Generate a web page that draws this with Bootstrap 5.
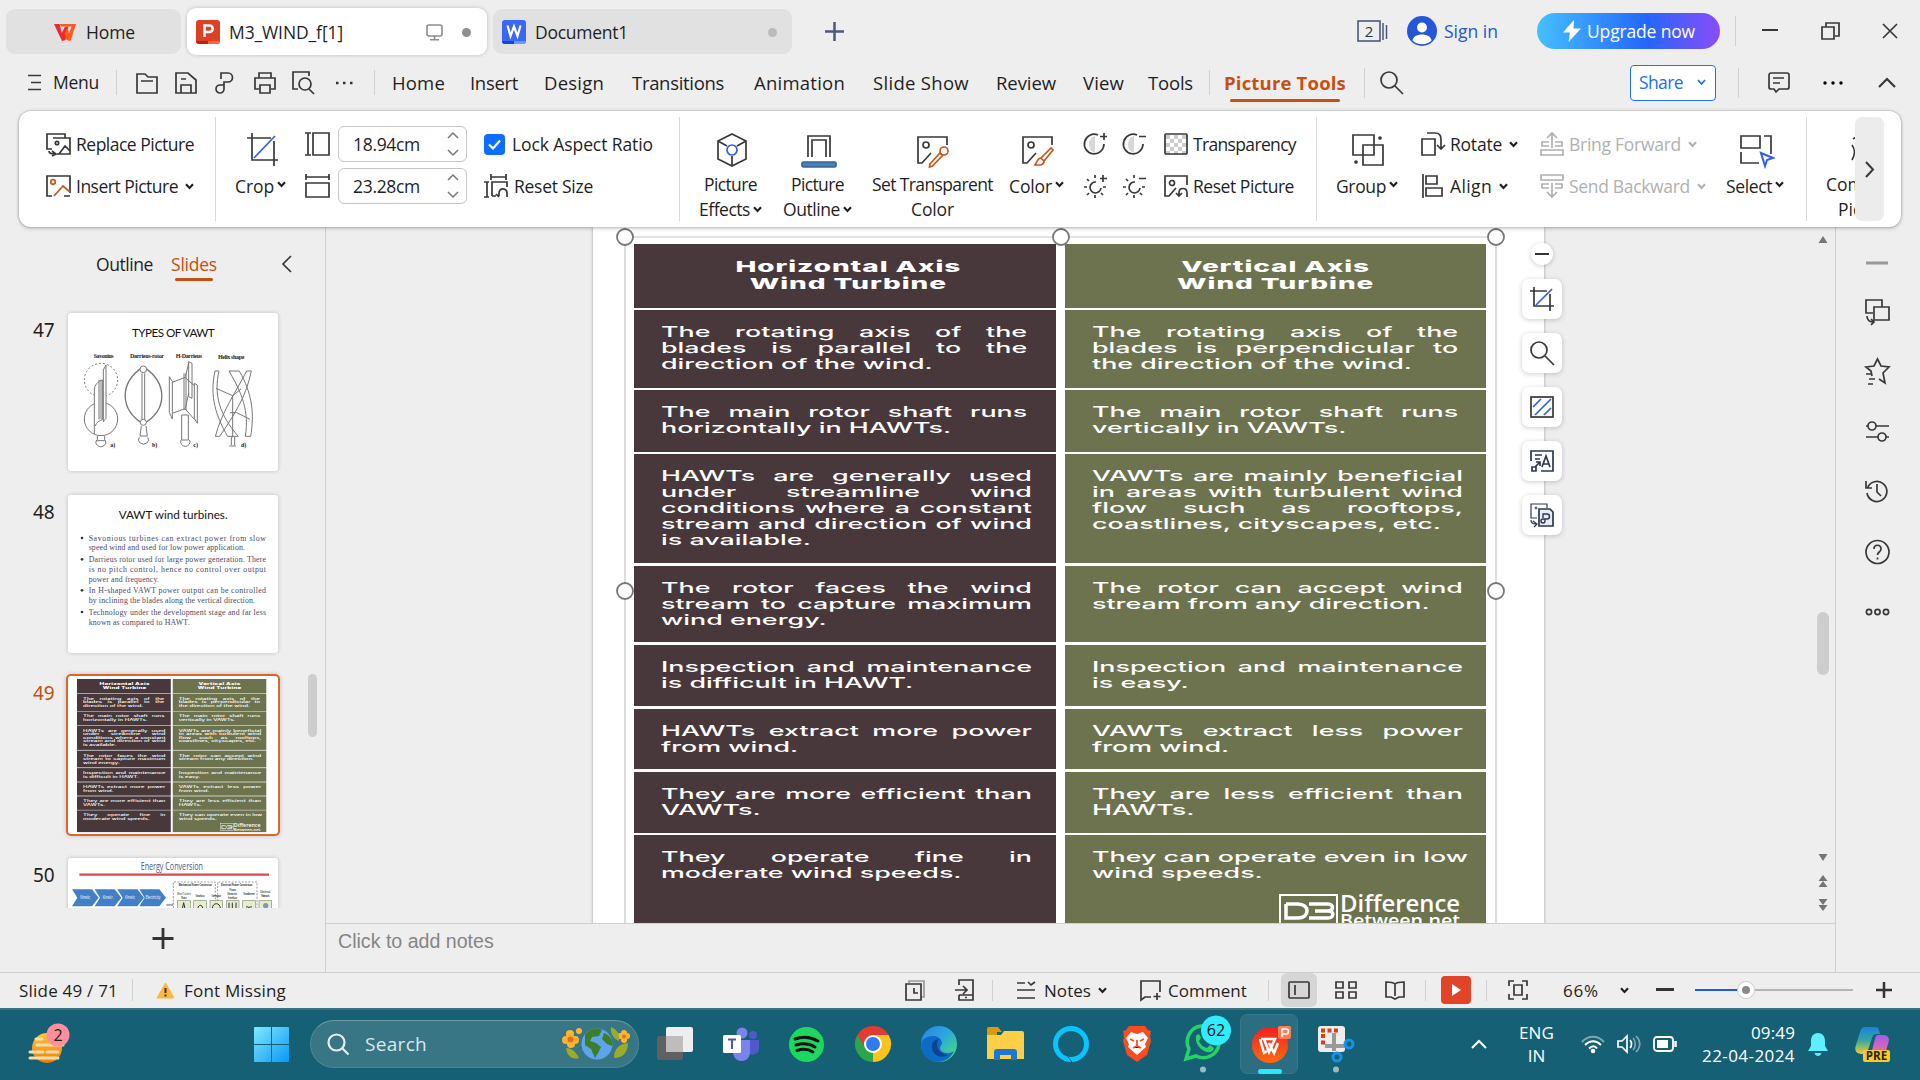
<!DOCTYPE html>
<html lang="en">
<head>
<meta charset="utf-8">
<title>M3_WIND_f[1] - Presentation</title>
<link href="https://cdn.jsdelivr.net/npm/bootstrap@5.3.0/dist/css/bootstrap.min.css" rel="stylesheet">
<script src="https://cdn.jsdelivr.net/npm/bootstrap@5.3.0/dist/js/bootstrap.bundle.min.js"></script>
<style>
html,body{width:1920px;height:1080px;overflow:hidden}
body{background:#eeeeee;font-family:"Open Sans","Noto Sans",sans-serif;font-size:17.5px;line-height:25px;color:#1f1f1f}
svg{display:block;overflow:visible;flex:none}
.ln{fill:none;stroke:#383838;stroke-width:1.7}
.gbar{display:grid;align-items:center;justify-items:start;white-space:nowrap}
.vline{width:1px;background:#d0d0d0}
[data-w]{display:inline-block;white-space:nowrap}
.orange{color:#c5500f}
/* title bar */
.titlebar{height:62px;padding-left:6px;grid-template-columns:181px 306px 332px 532px 50px 37px 93px 198px 27px 59px 61px 30px}
.doc-tab{height:45px;border-radius:9px;background:#e1e1e1;padding-top:2px}
.doc-tab.on{background:#fff;height:47px;box-shadow:0 0 4px #0003}
.tname{margin-left:9px}
.dot{width:9px;height:9px;border-radius:50%;background:#bbb;margin-right:15px}
.on .dot{background:#8f8f8f;margin:0 16px 0 19px}
.upgrade{width:183px;height:36px;background:linear-gradient(90deg,#45c0ff,#2467ff 60%,#8b4cf7);color:#fff;border-radius:18px;padding-left:26px}
/* menu bar */
.menubar{height:49px;padding:0 0 8px 28px;grid-template-columns:25px 63px 20px 39px 40px 39px 38px 43px 39px 18px 78px 74px 88px 122px 119px 123px 87px 65px 61px 15px 140px 16px 250px 108px 30px 55px 55px 30px;font-size:18.5px}
.pt-tab{position:relative}
.pt-tab::after{content:"";position:absolute;left:6px;right:6px;bottom:-7px;height:3px;border-radius:2px;background:#c5500f}
.share{width:86px;height:36px;border:1.5px solid #1a73f5;border-radius:4px;background:#fff;color:#1a6ff0;padding-left:8px}
/* ribbon */
.ribbon{width:1882px;height:116px;margin-left:19px;background:#fff;border-radius:12px;box-shadow:0 0 3px #0005,0 2px 4px #0002;padding-left:27px;align-items:start;position:relative;z-index:5;
grid-template-columns:169px 20px 70px 33px 146px 195px 20px 84px 89px 137px 75px 80px 152px 20px 85px 119px 186px 80px 20px 29px 29px}
.ribbon>.vline{height:104px;margin-top:6px;background:#d9d9d9}
.stack{padding-top:12px}
.stack>div{height:42px;display:flex;align-items:center;gap:5px}
.stack>.pair{gap:16px}
.bigbtn{padding-top:22px;text-align:center}
.bigbtn>svg{margin:0 auto 3px;position:relative;left:1px;top:-1px}
.bigbtn>.chev{margin-left:3px;top:1px;left:0;vertical-align:1px}
.one>svg{margin-bottom:5px}
.spin{width:129px;height:36px;border:1.5px solid #c4c4c4;border-radius:6px;padding:0 7px 0 14px}
.check{width:21px;height:21px;background:#0d6efd;border-radius:4px}
.off{color:#b0b0b0}
.off .ln{stroke:#b0b0b0}
.chev{margin-left:2px}
.more{width:29px;height:104px;margin-top:6px;background:#ececec;border-radius:7px}
.cut{width:29px;overflow:hidden;padding-top:22px;height:115px}
.cut svg{margin-bottom:3px}
/* workspace */
.work{height:745px}
.side{width:326px;border-right:1.5px solid #cfcfcf}
.side-head{height:78px;padding:0 0 4px 96px;grid-template-columns:75px 111px 20px}
.sl-tab{position:relative}
.sl-tab::after{content:"";position:absolute;left:4px;right:4px;bottom:-4px;height:3px;background:#c5500f;border-radius:2px}
.slides{height:603px;overflow:hidden;padding:8px 0 0 33px;position:relative}
.srow{display:flex;height:181.7px}
.srow>b{font-weight:400;width:35px;font-size:19px;padding-top:5px;font-family:"Noto Sans",sans-serif}
.thumb{width:210px;height:158px;background:#fff;border-radius:3px;box-shadow:0 0 4px #0003;overflow:hidden;flex:none}
.thumb.sel{margin:-2px 0 0 -2px;width:214px;height:162px;border:2px solid #d9662a;border-radius:5px}
.thumb.sel .pic{transform:scale(.2222);transform-origin:0 0;margin:3px 0 0 9px}
.sidebar-thumb{position:absolute;left:308px;top:369px;width:9px;height:63px;border-radius:5px;background:#cdcdcd}
.addslide{margin:20px 0 0 153px}
.center-pane{width:1510px;border-right:1.5px solid #cfcfcf}
.canvas{height:697px;overflow:hidden;position:relative;border-bottom:1.5px solid #cfcfcf;padding-left:267px}
.page{width:951px;height:800px;background:#fff;box-shadow:0 0 3px #0005;padding:17px 0 0 41px}
.overlay{position:absolute}
.fl{position:absolute;left:1196px;width:40px;height:40px;border-radius:7px;background:#fff;box-shadow:0 1px 5px #0003;display:flex;align-items:center;justify-content:center}
.notes{height:48px;color:#858585;font:19.6px "Liberation Sans",sans-serif;padding:6px 0 0 12px}
/* comparison picture on the slide */
.pic{width:852px;height:689px;display:grid;grid-template-columns:421.5px 421.5px;column-gap:9px;row-gap:2.5px;grid-template-rows:63.7px 77.6px 61.5px 108.8px 76.8px 61.2px 60.5px 61px 97.5px;position:relative;flex:none}
.cell{padding:14px 0 0 27.2px;background:#6d734f;color:#fff;overflow:hidden}
.cell.h{background:#48383b}
.cell.cellhead{padding:14px 0 0 0}
.wide{transform:scaleX(1.84);transform-origin:0 0;width:201.6px;font:500 14.6px/16px Inter,sans-serif;white-space:nowrap}
.wide.short{width:199px}
.wide div{text-align-last:justify;height:16px}
.wide div:last-child{text-align-last:left}
.wide.widehead{width:229px;font:800 15.2px/17px Inter,sans-serif;letter-spacing:.5px}
.widehead div,.widehead div:last-child{text-align-last:center;height:17px}
.h .wide.widehead{width:233px}
.dblogo{position:absolute;left:645px;top:650px}
/* right rail */
.rail{padding:1px 0 0 29px}
/* status */
.status{height:36px;border-top:1.5px solid #cfcfcf;padding:0 0 1px 19px;grid-template-columns:113px 24px 28px 721px 50px 37px 25px 27px 96px 28px 100px 13px 54px 50px 40px 16px 45px 22px 55px 57px 35px 39px 181px 20px;font-size:17px}
.selbox{width:36px;height:34px;background:#d6d6d6;border-radius:6px}
.play{width:30px;height:28px;background:#e14427;border-radius:4px}
/* taskbar */
.taskbar{height:72px;background:#156074;border-top:2px solid #3c717c;padding:0 0 2px 30px;color:#fff;grid-template-columns:224px 56px 347px 66px 66px 66px 66px 66px 66px 69px 62px 56px 77px 154px 48px 62px 36px 36px 49px 106px 47px 40px}
.find{width:329px;height:48px;border-radius:24px;background:#387585;border:1px solid #4e8895;border-top-color:#6b9aa5;padding:0 9px 0 16px;color:#dbe8ea;font-size:19px}
.active-app{width:58px;height:60px;border-radius:7px;background:#2c6e81;border:1px solid #37788a}
.clock{line-height:23px;font-size:17px;width:93px;text-align:right}
.lang{line-height:23px;font-size:17px}
</style>
</head>
<body class="d-flex flex-column">
<svg width="0" height="0" class="overlay"><defs>
<symbol id="chev" viewBox="0 0 9 7" overflow="visible"><path d="M1 1.2 4.5 5 8 1.2" fill="none" stroke="currentColor" stroke-width="2.1"/></symbol>
<symbol id="wps" viewBox="0 0 24 19"><path d="M1 1h5.5l2.3 9L12 3.500h3.500L12.500 17l-3.500 1z" fill="#f0282d"/><path d="M7 1h16l-5.500 17-4-1-2-6 3-6.500 1.500 6L18.500 3.500H8z" fill="#ff5a1c"/></symbol>
<linearGradient id="g1" x1="0" y1="0" x2="1" y2="1"><stop offset="0" stop-color="#7fe9ff"/><stop offset="1" stop-color="#0a97f5"/></linearGradient>
<linearGradient id="g2" x1="0" y1="0" x2="0" y2="1"><stop offset="0" stop-color="#ffc53a"/><stop offset="1" stop-color="#ef7a10"/></linearGradient>
<linearGradient id="g3" x1="0" y1="0" x2="1" y2="1"><stop offset="0" stop-color="#2a7fe8"/><stop offset=".45" stop-color="#2aa8e0"/><stop offset="1" stop-color="#4fe26a"/></linearGradient>
<linearGradient id="g4" x1="0" y1="0" x2="0" y2="1"><stop offset="0" stop-color="#ef2020"/><stop offset="1" stop-color="#ff6a10"/></linearGradient>
<linearGradient id="g5" x1="0" y1="0" x2="0" y2="1"><stop offset="0" stop-color="#1d7fe0"/><stop offset=".5" stop-color="#35a8a0"/><stop offset="1" stop-color="#f0d030"/></linearGradient>
<linearGradient id="g6" x1="0" y1="0" x2="0" y2="1"><stop offset="0" stop-color="#a45af0"/><stop offset="1" stop-color="#f0709a"/></linearGradient>
</defs></svg>

<header class="gbar titlebar">
  <div class="doc-tab d-flex align-items-center" style="width:175px;padding-left:47px"><svg width="24" height="19"><use href="#wps"/></svg><span class="tname" data-w="49">Home</span></div>
  <div class="doc-tab on d-flex align-items-center" style="width:300px;padding-left:9px">
    <svg width="24" height="24" viewBox="0 0 24 24"><rect width="24" height="24" rx="3" fill="#dd4023"/><path d="M0 21h12v3H3a3 3 0 0 1-3-3z" fill="#b8260f"/><path d="M12 21h12a3 3 0 0 1-3 3h-9z" fill="#ff6440"/><path d="M8.500 17V5.500h5a3.200 3.200 0 0 1 0 6.500h-5" fill="none" stroke="#fff" stroke-width="2.500"/></svg>
    <span class="tname" data-w="114">M3_WIND_f[1]</span>
    <svg class="ms-auto" width="17" height="17" viewBox="0 0 17 17"><rect x="1" y="1" width="15" height="11" rx="2" fill="none" stroke="#8d8d8d" stroke-width="1.600"/><path d="M8.500 12v3.500M4 15.800h9" stroke="#8d8d8d" stroke-width="1.600"/></svg>
    <i class="dot"></i></div>
  <div class="doc-tab d-flex align-items-center" style="width:299px;padding-left:9px">
    <svg width="24" height="24" viewBox="0 0 24 24"><rect width="24" height="24" rx="3" fill="#3a67f7"/><path d="M0 21h12v3H3a3 3 0 0 1-3-3z" fill="#1545cf"/><path d="M12 21h12a3 3 0 0 1-3 3h-9z" fill="#6f97ff"/><path d="M5.500 5.500l3 10.500L12 6.500 15.500 16l3-10.500" fill="none" stroke="#fff" stroke-width="2.200"/></svg>
    <span class="tname" data-w="93">Document1</span><i class="dot ms-auto"></i></div>
  <svg width="19" height="19" viewBox="0 0 19 19"><path d="M9.500 0v19M0 9.500h19" stroke="#4b5a7a" stroke-width="2.500"/></svg>
  <svg width="31" height="22" viewBox="0 0 31 22"><rect x="1" y="1" width="22" height="20" fill="none" stroke="#4b5a7a" stroke-width="1.600"/><path d="M26 3v17M29.500 5v14" stroke="#4b5a7a" stroke-width="1.500"/><text x="12" y="16.500" text-anchor="middle" font-size="15" fill="#333">2</text></svg>
  <svg width="30" height="30" viewBox="0 0 30 30"><circle cx="15" cy="15" r="15" fill="#2356d8"/><circle cx="15" cy="11.500" r="5" fill="#fff"/><path d="M5.500 24.500c1-8 18-8 19 0a14 14 0 0 1-19 0z" fill="#fff"/></svg>
  <span data-w="54" style="color:#2356d8">Sign in</span>
  <div class="upgrade d-flex align-items-center"><svg width="18" height="22" viewBox="0 0 18 22"><path d="M11 0 0 12.500h7L5.500 22 18 8.500h-7.500z" fill="#fff"/></svg><span data-w="108" style="margin-left:6px">Upgrade now</span></div>
  <i class="vline" style="height:30px"></i>
  <svg width="16" height="4"><path d="M0 1h16" stroke="#222" stroke-width="1.800"/></svg>
  <svg class="ln" width="19" height="18" viewBox="0 0 19 18"><path d="M5 5V1h13v13h-4M1 5h12v12H1z"/></svg>
  <svg class="ln" width="16" height="16" viewBox="0 0 16 16"><path d="M1 1l14 14M15 1 1 15"/></svg>
</header>

<nav class="gbar menubar">
  <svg class="ln" width="14" height="17" viewBox="0 0 14 17"><path d="M0 1.500h13M3 8.500h10M0 15.500h13"/></svg>
  <span data-w="46" style="font-size:17.5px">Menu</span>
  <i class="vline" style="height:25px"></i>
  <svg class="ln" width="22" height="22" viewBox="0 0 22 22"><path d="M1 21V2h8l3 3h9v16zM5 9h12"/></svg>
  <svg class="ln" width="22" height="22" viewBox="0 0 22 22"><path d="M1 1h12l8 7v13H1zM6 21v-8h10v8M6 7h5"/></svg>
  <svg class="ln" width="18" height="22" viewBox="0 0 18 22"><path d="M6 7V1h7a4.500 4.500 0 0 1 0 9H9v7a4 4 0 1 1-4-4h4"/></svg>
  <svg class="ln" width="22" height="22" viewBox="0 0 22 22"><path d="M5 6V1h12v5M5 17H1V6h20v11h-4M6 13h10v8H6z"/></svg>
  <svg class="ln" width="23" height="23" viewBox="0 0 23 23"><path d="M17 5V1H1v17h5"/><circle cx="13" cy="13" r="6"/><path d="M17 18l5 5"/></svg>
  <svg width="20" height="4" viewBox="0 0 20 4"><path d="M1 2h2.500M8 2h2.500M15 2h2.500" stroke="#333" stroke-width="2.500"/></svg>
  <i class="vline" style="height:25px"></i>
  <span data-w="53">Home</span><span data-w="48">Insert</span><span data-w="60">Design</span><span data-w="92">Transitions</span><span data-w="91">Animation</span><span data-w="96">Slide Show</span><span data-w="60">Review</span><span data-w="41">View</span><span data-w="45">Tools</span>
  <i class="vline" style="height:25px"></i>
  <span class="pt-tab orange fw-bold"><span data-w="122">Picture Tools</span></span>
  <i class="vline" style="height:30px"></i>
  <svg class="ln" width="23" height="23" viewBox="0 0 23 23"><circle cx="9" cy="9" r="8"/><path d="M15 15l8 8"/></svg>
  <div class="share d-flex align-items-center"><span data-w="44" style="font-size:17.5px">Share</span><svg width="9" height="7" style="margin-left:14px"><path d="M1 1l3.500 4L8 1" fill="none" stroke="#1a6ff0" stroke-width="1.700"/></svg></div>
  <i class="vline" style="height:30px"></i>
  <svg class="ln" width="22" height="21" viewBox="0 0 22 21"><path d="M3 1h16a2 2 0 0 1 2 2v12a2 2 0 0 1-2 2h-8l-3 3-2-3H3a2 2 0 0 1-2-2V3a2 2 0 0 1 2-2zM5 6h11M5 11h7"/></svg>
  <svg width="20" height="4" viewBox="0 0 20 4"><circle cx="2" cy="2" r="1.700"/><circle cx="10" cy="2" r="1.700"/><circle cx="18" cy="2" r="1.700"/></svg>
  <svg class="ln" width="18" height="10" viewBox="0 0 18 10"><path d="M1 9l8-8 8 8" stroke-width="2.200"/></svg>
</nav>

<section class="gbar ribbon">
  <div class="stack">
    <div><svg class="ln" width="25" height="22" viewBox="0 0 25 22"><path d="M19 5V1H1v15h5M7 5h17v16H11M13 21l6-8 5 5M3 18c0 3 3 3 6 3M6 18l4 3-4 2"/><circle cx="11" cy="10" r="1.700"/></svg><span data-w="118">Replace Picture</span></div>
    <div><svg class="ln" width="25" height="22" viewBox="0 0 25 22"><path d="M24 18V1H1v20h5M18 21h6"/><path d="M8 21l9-10 7 6" stroke="#c9561a"/><circle cx="7" cy="7" r="2.300" stroke="#c9561a"/></svg><span data-w="102">Insert Picture</span><svg class="chev" width="9" height="7"><use href="#chev"/></svg></div>
  </div>
  <i class="vline"></i>
  <div class="bigbtn one"><svg class="ln" width="34" height="36" viewBox="0 0 34 36"><path d="M2 6h24M7 1v27h26M29 9v25"/><path d="M9 26 30 4" stroke="#2f5fe8"/></svg><span data-w="39">Crop</span><svg class="chev d-inline" width="9" height="7"><use href="#chev"/></svg></div>
  <div class="stack">
    <div><svg class="ln" width="25" height="24" viewBox="0 0 25 24"><path d="M8 1h16v22H8zM3 1v22M0 1h6M0 23h6"/></svg></div>
    <div><svg class="ln" width="25" height="24" viewBox="0 0 25 24"><path d="M1 9h23v14H1zM1 3h23M1 0v6M24 0v6"/></svg></div>
  </div>
  <div class="stack">
    <div><div class="spin d-flex align-items-center justify-content-between"><span data-w="67">18.94cm</span><svg width="12" height="24" viewBox="0 0 12 24" fill="none" stroke="#777" stroke-width="1.500"><path d="M1 6l5-5 5 5M1 18l5 5 5-5"/></svg></div></div>
    <div><div class="spin d-flex align-items-center justify-content-between"><span data-w="67">23.28cm</span><svg width="12" height="24" viewBox="0 0 12 24" fill="none" stroke="#777" stroke-width="1.500"><path d="M1 6l5-5 5 5M1 18l5 5 5-5"/></svg></div></div>
  </div>
  <div class="stack">
    <div><span class="check me-1"><svg width="21" height="21" viewBox="0 0 21 21"><path d="M5 10.500l4 4 7-8" fill="none" stroke="#fff" stroke-width="2.200"/></svg></span><span data-w="141" style="margin-left:-2px">Lock Aspect Ratio</span></div>
    <div><svg class="ln" width="25" height="24" viewBox="0 0 25 24"><path d="M7 3h15M7 0v6M22 0v6M3 8v15M0 8h5M0 23h5M8 22V8h15v5M8 22h4M15 19v3M15 19c0-6 8-5 8 0v4M12 20l3 3"/></svg><span data-w="79">Reset Size</span></div>
  </div>
  <i class="vline"></i>
  <div class="bigbtn"><svg class="ln" width="30" height="36" viewBox="0 0 30 36"><path d="M15 2l14 7v18l-14 7-14-7V9zM1 9l9 5M29 9l-9 5M15 24v10"/><circle cx="15" cy="18" r="5" stroke="#2f5fe8"/></svg><span data-w="53">Picture</span><br><span data-w="51">Effects</span><svg class="chev d-inline" width="9" height="7"><use href="#chev"/></svg></div>
  <div class="bigbtn"><svg class="ln" width="36" height="36" viewBox="0 0 36 36"><path d="M7 25V4h22v21M11 25V8h14v17"/><rect x="1" y="30" width="34" height="5" rx="1.500" fill="#4a7ebb" stroke="#36659c"/></svg><span data-w="53">Picture</span><br><span data-w="57">Outline</span><svg class="chev d-inline" width="9" height="7"><use href="#chev"/></svg></div>
  <div class="bigbtn"><svg class="ln" width="32" height="36" viewBox="0 0 32 36"><path d="M30 13V5H1v26h4l9-10"/><circle cx="9" cy="13" r="3"/><g stroke="#c9561a"><path d="M13 32l10-11 2.500 2.500L15.500 34l-3 1z"/><circle cx="27" cy="19" r="4"/></g></svg><span data-w="121">Set Transparent</span><br><span data-w="43">Color</span></div>
  <div class="bigbtn one"><svg class="ln" width="32" height="36" viewBox="0 0 32 36"><path d="M30 13V5H1v26h4l9-10"/><circle cx="9" cy="13" r="3"/><g stroke="#c9561a"><path d="M29 16 19 26l3 3 9-11zM19 26c-3 0-3 2-6 7h6c3-1 3-3 3-4"/></g></svg><span data-w="43">Color</span><svg class="chev d-inline" width="9" height="7"><use href="#chev"/></svg></div>
  <div class="stack">
    <div class="pair"><svg class="ln" width="23" height="23" viewBox="0 0 23 23"><path d="M11 3a9 9 0 0 0 0 17z" fill="#d8d8d8" stroke="none"/><path d="M14 2a9.800 9.800 0 1 0 6 9M20 0v7M16 3.500h7"/></svg><svg class="ln" width="23" height="23" viewBox="0 0 23 23"><path d="M11 3a9 9 0 0 0 0 17z" fill="#d8d8d8" stroke="none"/><path d="M14 2a9.800 9.800 0 1 0 6 9M16 3.500h7"/></svg></div>
    <div class="pair"><svg class="ln" width="23" height="23" viewBox="0 0 23 23"><path d="M12 7a5.500 5.500 0 1 0 5 6M11 0v3M11 20v3M0 12h3M3 4l2 2M3 20l2-2M17 18l2 2M19 0v7M16 3.500h7M19 12h3"/></svg><svg class="ln" width="23" height="23" viewBox="0 0 23 23"><path d="M12 7a5.500 5.500 0 1 0 5 6M11 0v3M11 20v3M0 12h3M3 4l2 2M3 20l2-2M17 18l2 2M16 3.500h7M19 12h3"/></svg></div>
  </div>
  <div class="stack">
    <div><svg class="ln" width="24" height="22" viewBox="0 0 24 22"><path d="M2 4h20M2 12h20M2 20h20" stroke="#ccc" stroke-width="4" stroke-dasharray="4 4"/><path d="M6 8h16M6 16h16" stroke="#ccc" stroke-width="4" stroke-dasharray="4 4"/><rect x="1" y="1" width="22" height="20" rx="1"/></svg><span data-w="103">Transparency</span></div>
    <div><svg class="ln" width="24" height="22" viewBox="0 0 24 22"><path d="M23 10V1H1v20h4l7-8M15 17v4M15 18c0-6 8-6 8 0v4M12 18l3 3 3-3"/><circle cx="8" cy="8" r="2.500"/></svg><span data-w="101">Reset Picture</span></div>
  </div>
  <i class="vline"></i>
  <div class="bigbtn one"><svg class="ln" width="32" height="36" viewBox="0 0 32 36"><path d="M1 3h21v20H1zM11 13h20v20H11z"/><circle cx="28" cy="6" r="1" fill="#333"/><circle cx="4" cy="30" r="1" fill="#333"/></svg><span data-w="50">Group</span><svg class="chev d-inline" width="9" height="7"><use href="#chev"/></svg></div>
  <div class="stack">
    <div><svg class="ln" width="24" height="24" viewBox="0 0 24 24"><path d="M1 7h13v16H1zM6 1h8c5 0 6 3 6 6v10M16 13l4 4 4-4"/></svg><span data-w="52">Rotate</span><svg class="chev" width="9" height="7"><use href="#chev"/></svg></div>
    <div><svg class="ln" width="24" height="24" viewBox="0 0 24 24"><path d="M2 0v24M5 2h11v8H5zM5 14h16v8H5z"/></svg><span data-w="42">Align</span><svg class="chev" width="9" height="7"><use href="#chev"/></svg></div>
  </div>
  <div class="stack off">
    <div><svg class="ln" width="24" height="24" viewBox="0 0 24 24"><path d="M1 18h22v5H1zM12 16V1M7 6l5-5 5 5M9 10H2v4h7M15 10h7v4h-7"/></svg><span data-w="112">Bring Forward</span><svg class="chev" width="9" height="7"><use href="#chev"/></svg></div>
    <div><svg class="ln" width="24" height="24" viewBox="0 0 24 24"><path d="M1 1h22v5H1zM12 9v14M7 18l5 5 5-5M9 10H2v4h7M15 10h7v4h-7"/></svg><span data-w="121">Send Backward</span><svg class="chev" width="9" height="7"><use href="#chev"/></svg></div>
  </div>
  <div class="bigbtn one"><svg class="ln" width="32" height="36" viewBox="0 0 32 36"><path d="M20 4H1v12h19zM1 20v11h18M24 4h7v18"/><path d="M21 21l12 5-6 2-2 6z" stroke="#2f5fe8" stroke-width="2"/></svg><span data-w="46">Select</span><svg class="chev d-inline" width="9" height="7"><use href="#chev"/></svg></div>
  <i class="vline"></i>
  <div class="cut"><svg class="ln" width="29" height="36" viewBox="0 0 29 36"><path d="M26 12c3 4 3 10 0 15M27 6l3-2"/></svg>Com<br><span style="margin-left:12px">Pict</span></div>
  <div class="more d-flex align-items-center justify-content-center"><svg class="ln" width="8" height="15" viewBox="0 0 8 15"><path d="M0 0l7 7.500L0 15" stroke-width="2"/></svg></div>
</section>

<main class="d-flex work">
  <aside class="side">
    <div class="gbar side-head"><span data-w="57">Outline</span><span class="sl-tab orange"><span data-w="46">Slides</span></span><svg class="ln" width="9" height="16" viewBox="0 0 9 16"><path d="M9 0 1 8l8 8"/></svg></div>
    <div class="slides">
      <div class="srow"><b>47</b><div class="thumb"><svg width="210" height="158" viewBox="204 249 630 474">
        <text x="396" y="321" font-size="35" textLength="248" fill="#111" font-family="Lato">TYPES OF VAWT</text>
        <g font-family="Liberation Serif" font-weight="bold" font-size="18" fill="#222"><text x="281" y="385" textLength="60">Savonius</text><text x="390" y="385" textLength="102">Darrieus-rotor</text><text x="527" y="385" textLength="79">H-Darrieus</text><text x="654" y="387" textLength="79">Helix shape</text><text x="331" y="650">a)</text><text x="456" y="650">b)</text><text x="580" y="650">c)</text><text x="723" y="650">d)</text></g>
        <g fill="none" stroke="#777" stroke-width="3"><circle cx="303" cy="450" r="50" stroke-dasharray="6 6"/><circle cx="303" cy="567" r="50"/><path fill="#fff" d="M283 612V480c0-15 12-28 25-30V568c-8 4-20 8-22 20M318 405v160l-8 10V420zM292 618v14h22v-14"/><path d="M297 450v118M303 450v118"/><path d="M290 630a15 13 0 1 0 25 0"/>
        <path d="M430 410c-75 50-70 130 0 172M430 410c75 50 73 130 0 172" stroke-width="4"/><path d="M426 430v145M434 430v145M424 588l-4 30h22l-4-30"/><circle cx="430" cy="418" r="10" fill="#fff"/><circle cx="430" cy="577" r="9" fill="#fff"/><path d="M418 622a15 13 0 1 0 25 0"/>
        <path d="M508 440l9 15v112l-9-20zM583 460l9 5v115l-9-15zM566 395l10 5v105l-10-5zM517 457l38-15 28 25M517 550l38-14 28 32M552 430v110M558 430v110M566 400l-10 40M566 490l-10 45"/><path d="M545 555h20v75h-20zM543 630a14 14 0 1 0 26 0" fill="#fff"/>
        <path d="M740 423h14c-15 75-50 130-95 196h-13c20-75 60-130 94-196zM645 423h12c-16 70 0 130 58 196h-32c-35-60-55-120-38-196zM687 423h31c40 70 45 130 34 196h-16c12-75-10-130-49-196z" fill="#fff"/><path d="M648 475l50 22 25-20M698 497v125M690 548h20l40 20M694 620v25M704 620v25M688 648h20"/></g></svg></div></div>
      <div class="srow"><b>48</b><div class="thumb"><svg width="210" height="158" viewBox="204 795 630 474">
        <text x="356" y="867" font-size="35" textLength="327" fill="#111" font-family="Lato">VAWT wind turbines.</text>
        <g font-family="Liberation Serif" font-size="23.500" fill="#4a4a66"><text x="266" y="932" textLength="532">Savonious turbines can extract power from slow</text><text x="266" y="961" textLength="469">speed wind and used for low power application.</text><text x="266" y="996" textLength="532">Darrieus rotor used for large power generation. There</text><text x="266" y="1025" textLength="532">is no pitch control, hence no control over output</text><text x="266" y="1055" textLength="211">power and frequency.</text><text x="266" y="1089" textLength="532">In H-shaped VAWT power output can be controlled</text><text x="266" y="1119" textLength="499">by inclining the blades along the vertical direction.</text><text x="266" y="1154" textLength="532">Technology under the development stage and far less</text><text x="266" y="1184" textLength="303">known as compared to HAWT.</text></g>
        <g fill="#333"><circle cx="246" cy="924" r="4"/><circle cx="246" cy="988" r="4"/><circle cx="246" cy="1081" r="4"/><circle cx="246" cy="1146" r="4"/></g></svg></div></div>
      <div class="srow"><b class="orange">49</b><div class="thumb sel"><div class="pic"></div></div></div>
      <div class="srow"><b>50</b><div class="thumb"><svg width="210" height="158" viewBox="204 594 630 474">
        <text x="422" y="631" font-size="34" textLength="187" lengthAdjust="spacingAndGlyphs" fill="#3b5f8c">Energy Conversion</text><path d="M238 644h569" stroke="#d9484c" stroke-width="7"/>
        <g fill="#417fc6"><path id="arw" d="M216 688h60l20 25-20 26h-60l16-26z"/><use href="#arw" x="68"/><use href="#arw" x="136"/><use href="#arw" x="202"/></g>
        <g fill="#fff" font-size="14"><text x="241" y="718" textLength="30" lengthAdjust="spacingAndGlyphs">Kinetic</text><text x="308" y="718" textLength="30" lengthAdjust="spacingAndGlyphs">Kinetic</text><text x="375" y="718" textLength="30" lengthAdjust="spacingAndGlyphs">Kinetic</text><text x="437" y="718" textLength="44" lengthAdjust="spacingAndGlyphs">Electricity</text></g>
        <path d="M520 744v-78h126v78M653 744v-78h118v78" fill="none" stroke="#666" stroke-width="2" stroke-dasharray="6 4"/>
        <g font-size="10" fill="#222"><g font-weight="bold"><text x="536" y="678" textLength="100" lengthAdjust="spacingAndGlyphs">Mechanical Power Conversion</text><text x="663" y="678" textLength="94" lengthAdjust="spacingAndGlyphs">Electrical Power Conversion</text></g><text x="531" y="704" textLength="42" lengthAdjust="spacingAndGlyphs">Wind Turbine</text><text x="543" y="716" textLength="18">Rotor</text><text x="586" y="711" textLength="28">Gearbox</text><text x="634" y="711" textLength="30">Generator</text><text x="688" y="692" textLength="20">Power</text><text x="682" y="705" textLength="30">Electronic</text><text x="684" y="718" textLength="28">Interface</text><text x="729" y="705" textLength="36">Transformer</text><text x="781" y="698" textLength="30">Electrical</text><text x="783" y="711" textLength="26">Network</text><text x="499" y="737" textLength="20">wind</text></g>
        <g fill="#e6edce" stroke="#84906a" stroke-width="2"><rect x="532" y="722" width="39" height="40"/><rect x="581" y="722" width="38" height="40"/><rect x="630" y="722" width="38" height="40"/><rect x="679" y="722" width="38" height="40"/><rect x="728" y="722" width="38" height="40"/><rect x="777" y="722" width="38" height="40"/></g>
        <path d="M551 728l-4 18h8zM594 745c0-12 14-12 14 0M637 745a12 14 0 0 1 24 0M687 728v16M697 728v16M708 728v16M738 742a5 4 0 0 1 9 2 5 4 0 0 1 9-2" fill="none" stroke="#333" stroke-width="3"/><circle cx="797" cy="737" r="8" fill="#8791bb"/></svg></div></div>
      <i class="sidebar-thumb"></i>
    </div>
    <svg class="addslide" width="21" height="21" viewBox="0 0 21 21"><path d="M10 0v21M-.5 10.500h21" stroke="#333" stroke-width="2.800"/></svg>
  </aside>
  <section class="center-pane">
    <div class="canvas">
      <div class="page"><div class="pic" id="pic"></div></div>
      <svg class="overlay" style="left:0;top:0" width="1236" height="696" viewBox="326 227 1236 696"><path d="M625 923V237h871v686" fill="none" stroke="#c6c6c6" stroke-width="1.200"/><g fill="#fff" stroke="#777" stroke-width="1.800"><circle cx="625" cy="237" r="8"/><circle cx="1061" cy="237" r="8"/><circle cx="1496" cy="237" r="8"/><circle cx="625" cy="591" r="8"/><circle cx="1496" cy="591" r="8"/></g></svg>
      <div class="fl" style="top:16px;left:1205px;width:22px;height:22px;border-radius:50%"><svg width="14" height="2"><path d="M0 1h14" stroke="#333" stroke-width="2"/></svg></div>
      <div class="fl" style="top:52px"><svg class="ln" width="24" height="24" viewBox="0 0 24 24"><path d="M0 4h17M4 0v19h20M20 7v17"/><path d="M6 18 22 2" stroke="#2f5fe8"/></svg></div>
      <div class="fl" style="top:106px"><svg class="ln" width="24" height="24" viewBox="0 0 24 24"><circle cx="9" cy="9" r="8"/><path d="M15 15l9 9"/></svg></div>
      <div class="fl" style="top:160px"><svg class="ln" width="24" height="22" viewBox="0 0 24 22"><rect x="1" y="1" width="22" height="20"/><path d="M3 11l8-8M5 19 21 3M14 19l7-7" stroke="#2f5fe8"/></svg></div>
      <div class="fl" style="top:214px"><svg class="ln" style="stroke:#2c3850" width="24" height="22" viewBox="0 0 24 22"><path d="M1 11V1h22v20H11M5 5h7M5 9h5M2 17h4v4H2zM5 17l5-5M6 12h4v4M12 17l4-11 4 11M13 14h6"/></svg></div>
      <div class="fl" style="top:268px"><svg class="ln" style="stroke:#2c3850" width="24" height="24" viewBox="0 0 24 24"><path d="M17 5V1H1v14h6M1 17c0 3 2 4 5 4M3 18l4 3-3 3" stroke-width="1.200"/><path d="M9 6h11l3 3v14H9z" fill="#e9ecf4"/><path d="M13 15v-4h4a2.500 2.500 0 0 1 0 5h-2v2a2 2 0 1 1-2-2h2" stroke-width="1.400"/><circle cx="6" cy="5" r="1" stroke-width="1"/></svg></div>
      <svg class="overlay" style="left:1491px;top:1px" width="12" height="696" viewBox="1817 228 12 696" fill="#757575"><rect x="1817" y="612" width="12" height="63" rx="6" fill="#cdcdcd"/><path d="M1823 236l4.500 7h-9zM1823 861l4.500-7h-9zM1823 875l4.500 6h-9zM1823 881l4.500 6h-9zM1823 905l4.500-6h-9zM1823 911l4.500-6h-9z"/></svg>
    </div>
    <div class="notes">Click to add notes</div>
  </section>
  <aside class="rail">
    <svg class="ln" width="26" height="400" viewBox="1866 228 26 400"><path d="M1867 263h22" stroke="#999" stroke-width="3"/>
      <path d="M1874 313h-7v-13h16v7M1875 307h15v13h-15zM1868 316c0 4 3 6 6 6M1872 319l3 3-3 3"/>
      <path d="M1873 376l-1-5-5-4 8-1 3.500-7 3.500 7 8 1-6 6 2 10-6-4M1867 374h6M1870 379h6M1869 384h5"/>
      <path d="M1867 426h2M1877 426h13M1867 437h12M1887 437h3"/><circle cx="1873" cy="426" r="4"/><circle cx="1883" cy="437" r="4"/>
      <path d="M1868.500 488a10 10 0 1 1-.5 5M1867 481v7h6M1878 484v8l4 4"/>
      <circle cx="1878.500" cy="552" r="11.500"/><path d="M1875 549c0-5 7-5 7 0 0 3-3.500 3-3.500 6M1878.500 557.500v2"/>
      <circle cx="1870" cy="612" r="2.600"/><circle cx="1878.500" cy="612" r="2.600"/><circle cx="1887" cy="612" r="2.600"/></svg>
  </aside>
</main>

<footer class="gbar status">
  <span data-w="99">Slide 49 / 71</span><i class="vline" style="height:22px"></i>
  <svg width="19" height="17" viewBox="0 0 19 17"><path d="M9.500 1 18 16H1z" fill="#f9b740" stroke="#f9b740" stroke-linejoin="round"/><path d="M9.500 6v5M9.500 12.500v2" stroke="#493300" stroke-width="2"/></svg>
  <span data-w="102">Font Missing</span>
  <svg class="ln" width="20" height="21" viewBox="0 0 20 21"><path d="M4 3V1h15v16h-3" stroke="#999"/><path d="M1 4h15v16H1zM9 8v5h4"/></svg>
  <svg class="ln" width="20" height="22" viewBox="0 0 20 22"><path d="M4 6V1h14v20H4v-5M4 16h14M0 11h11M8 7l4 4-4 4M10 18.500h2"/></svg>
  <i class="vline" style="height:21px"></i>
  <svg class="ln" width="20" height="18" viewBox="0 0 20 18"><path d="M0 2h8M0 9h18M0 17h18M11 1l3 3 4-3"/></svg>
  <div class="d-flex align-items-center" style="gap:7px"><span data-w="47">Notes</span><svg width="9" height="7"><use href="#chev"/></svg></div>
  <svg class="ln" width="22" height="20" viewBox="0 0 22 20"><path d="M11 17H5l-4 3V1h19v11M17 13v7M13.500 16.500h7"/></svg>
  <span data-w="79">Comment</span><i class="vline" style="height:21px"></i>
  <div class="selbox d-flex align-items-center justify-content-center"><svg class="ln" width="22" height="18" viewBox="0 0 22 18"><rect x="1" y="1" width="20" height="16" rx="1"/><path d="M7 4v10"/></svg></div>
  <svg class="ln" width="22" height="18" viewBox="0 0 22 18"><path d="M1 1h7v6H1zM14 1h7v6h-7zM1 11h7v6H1zM14 11h7v6h-7z"/></svg>
  <svg class="ln" width="20" height="19" viewBox="0 0 20 19"><path d="M10 3C8 1 4 1 1 1v15h5l4 2 4-2h5V1c-3 0-7 0-9 2v12"/></svg>
  <i class="vline" style="height:21px"></i>
  <div class="play d-flex align-items-center justify-content-center"><svg width="9" height="12"><path d="M0 0l9 6-9 6z" fill="#fff"/></svg></div>
  <i class="vline" style="height:21px"></i>
  <svg class="ln" width="20" height="20" viewBox="0 0 20 20"><path d="M1 6V1h5M14 1h5v5M19 14v5h-5M6 19H1v-5M6 5h8v10H6z"/></svg>
  <span data-w="36">66%</span><svg width="9" height="7"><use href="#chev"/></svg>
  <svg width="18" height="4"><path d="M1 1.500h18" stroke="#333" stroke-width="3"/></svg>
  <svg width="158" height="20" viewBox="0 0 158 20"><path d="M1 10h158" stroke="#b5b5b5" stroke-width="2"/><path d="M1 10h45" stroke="#2257e0" stroke-width="2"/><circle cx="52" cy="10" r="8.500" fill="#fff" stroke="#ccc"/><circle cx="52" cy="10" r="4" fill="#8a8a8a"/></svg>
  <svg width="16" height="16"><path d="M9 0v16M1 8h16" stroke="#333" stroke-width="2.500"/></svg>
</footer>

<div class="gbar taskbar">
  <svg width="40" height="42" viewBox="31 1019 40 42"><circle cx="48" cy="1044" r="15" fill="url(#g2)"/><path d="M37 1035h6M38 1041h26M31 1048h13M48 1048h11M31 1054h28" stroke="#f7dfa6" stroke-width="3" stroke-linecap="round"/><circle cx="59" cy="1031" r="11.500" fill="#ff8f9b"/><text x="59" y="1037" font-size="16" text-anchor="middle" fill="#222">2</text></svg>
  <svg width="35" height="35" viewBox="0 0 35 35" fill="url(#g1)"><path d="M0 1a1 1 0 0 1 1-1h16v17H0zM18 0h16a1 1 0 0 1 1 1v16H18zM0 18h17v17H1a1 1 0 0 1-1-1zM18 18h17v16a1 1 0 0 1-1 1H18z"/></svg>
  <div class="find d-flex align-items-center"><svg width="22" height="22" viewBox="0 0 22 22" fill="none" stroke="#e6eef0" stroke-width="2.200"><circle cx="9.500" cy="9.500" r="8"/><path d="M15.500 15.500l6 6"/></svg><span data-w="62" style="margin-left:16px">Search</span>
    <svg class="ms-auto" width="66" height="34" viewBox="0 0 66 34"><g fill="#ffb52e"><circle cx="7" cy="7" r="4"/><circle cx="3" cy="13" r="4"/><circle cx="12" cy="13" r="4"/><circle cx="8" cy="17" r="4"/><circle cx="16" cy="4" r="3"/><circle cx="57" cy="9" r="3"/><circle cx="64" cy="9" r="3"/><circle cx="61" cy="6" r="3"/><circle cx="61" cy="13" r="3"/></g><circle cx="7.500" cy="12.500" r="3" fill="#f0662a"/><circle cx="61" cy="9.500" r="2" fill="#f0662a"/><circle cx="34" cy="17" r="15.500" fill="#5fa3ea"/><path d="M22 8c4-7 14-8 17-5l-3 6-7 1-2 4 6 2 5 4-3 6-3 5-4-9-6-4zM41 6c6 2 10 8 8 13l-5-2-5-5z" fill="#3b7f27"/><path d="M3 21c6 0 10 4 13 10-7 2-12-2-13-10zM51 31c0-9 5-14 14-15 0 9-5 15-14 15zM48 0c7 3 9 8 8 14-5-2-9-7-8-14z" fill="#9bab2a"/></svg></div>
  <svg width="36" height="34" viewBox="0 0 36 34"><rect x="9" width="27" height="25" rx="2" fill="#eee"/><rect y="9" width="26" height="24" rx="2" fill="#606060"/><path d="M9 9h17v16H9z" fill="#bdbdbd"/></svg>
  <svg width="36" height="34" viewBox="0 0 36 34"><circle cx="19" cy="6" r="5.500" fill="#7b83eb"/><circle cx="30" cy="8" r="4" fill="#5059c9"/><path d="M24 13h12v9c0 6-8 7-11 4z" fill="#5059c9"/><path d="M10 13h17v12c0 12-17 12-17 0z" fill="#7b83eb"/><rect y="8" width="18" height="18" rx="1.500" fill="#fff"/><path d="M5 12.500h8M9 12.500V22" stroke="#4b53bc" stroke-width="2"/></svg>
  <svg width="35" height="35" viewBox="0 0 35 35"><circle cx="17.500" cy="17.500" r="17.500" fill="#1ed760"/><path d="M6 12c8-3 16-2 23 2M7 18c7-2 14-1 19 2M8 23.500c6-2 12-1 16 1.500" fill="none" stroke="#111" stroke-width="3" stroke-linecap="round"/></svg>
  <svg width="36" height="36" viewBox="0 0 36 36"><path d="M18 18 2.400 9A18 18 0 0 1 33.600 9z" fill="#e33b2e"/><path d="M18 18V9h15.600A18 18 0 0 1 18 36z" fill="#fcc31e"/><path d="M18 18 18 36A18 18 0 0 1 2.400 9z" fill="#2da44e"/><path d="M18 36l8-13-8-5z" fill="#fcc31e"/><path d="M18 9H2.400L10 22z" fill="#e33b2e"/><circle cx="18" cy="18" r="9" fill="#fff"/><circle cx="18" cy="18" r="7" fill="#2f7bee"/></svg>
  <svg width="36" height="36" viewBox="0 0 36 36"><circle cx="18" cy="18" r="18" fill="url(#g3)"/><path d="M0 18c1-9 20-12 21-1 0 2-2 3-2 5 0 5 9 7 14 3-3 7-10 11-16 11C7 36 0 28 0 18z" fill="#0c6bc4"/><path d="M11 21c0-5 3-8 7-8-4 4-2 15 9 16-8 4-16 0-16-8z" fill="#13418f"/></svg>
  <svg width="37" height="34" viewBox="0 0 37 34"><path d="M0 2a2 2 0 0 1 2-2h9l4 5h-5v10H0z" fill="#d99b0e"/><path d="M0 8h14l3-4h18a2 2 0 0 1 2 2v26H0z" fill="#ffcf47"/><path d="M7 33v-8a3 3 0 0 1 3-3h17a3 3 0 0 1 3 3v8h-6v-5H13v5z" fill="#1c77cf"/></svg>
  <svg width="36" height="36" viewBox="0 0 36 36"><circle cx="18" cy="18" r="15.500" fill="none" stroke="#0ac4ff" stroke-width="5"/><path d="M15 31l4 5" stroke="#156074"/></svg>
  <svg width="30" height="36" viewBox="0 0 30 36"><path d="M7 0h16l3 4 3 1-1 6 1 4-4 14-10 7-10-7L1 15l1-4-1-6 3-1z" fill="#fa4b21"/><path d="M9 6l6 2 6-2 5 6-3 6 1 3-9 8-9-8 1-3-3-6z" fill="#fff"/><path d="M8 13l4 2M22 13l-4 2M15 14v6M11 22l4-2 4 2" stroke="#fa4b21" stroke-width="1.800"/></svg>
  <svg width="48" height="58" viewBox="1184 1016 48 58"><path d="M1186 1060l3-10a16 16 0 1 1 7 7z" fill="none" stroke="#25d366" stroke-width="3.500"/><path d="M1196 1037c2-3 4-2 5 2l-2 3c2 4 4 6 8 7l3-3 4 3c-1 5-6 5-10 3-5-3-9-8-8-15z" fill="#25d366"/><circle cx="1216" cy="1031.500" r="15" fill="#30ecff"/><text x="1216" y="1037" font-size="16" text-anchor="middle" fill="#111">62</text><circle cx="1203" cy="1070.500" r="3" fill="#9bbac2"/></svg>
  <div class="active-app"><svg width="58" height="60" viewBox="1240 1014 58 60"><circle cx="1269" cy="1044" r="18" fill="url(#g4)"/><path d="M1260 1038h14l-6 13-5-13M1259 1038l4 14 3-2M1268 1042l5 10 4-10" fill="none" stroke="#fff" stroke-width="2.600"/><rect x="1277" y="1025" width="13" height="13" rx="2" fill="#ff7d55"/><path d="M1281 1036v-8h4a2 2 0 0 1 0 5h-4" fill="none" stroke="#fff" stroke-width="1.500"/><rect x="1257" y="1068" width="24" height="5" rx="2.500" fill="#2be7fa"/></svg></div>
  <svg width="38" height="58" viewBox="1316 1016 38 58"><rect x="1317" y="1027" width="27" height="26" rx="3" fill="#ededed"/><path d="M1320 1031.500h18M1322 1035v12" stroke="#d9400a" stroke-width="4" stroke-dasharray="4 2.500"/><path d="M1333 1034v18M1324 1047h20" stroke="#999" stroke-width="4"/><circle cx="1348" cy="1045" r="4" fill="none" stroke="#1593e8" stroke-width="3"/><circle cx="1336" cy="1058" r="4" fill="none" stroke="#1593e8" stroke-width="3"/><circle cx="1335" cy="1070.500" r="3" fill="#9bbac2"/></svg>
  <svg width="16" height="9" viewBox="0 0 16 9"><path d="M1 8l7-7 7 7" fill="none" stroke="#fff" stroke-width="2"/></svg>
  <div class="text-center lang"><span data-w="35">ENG</span><br>IN</div>
  <svg width="24" height="20" viewBox="0 0 24 20" fill="none" stroke="#fff" stroke-width="2"><path d="M1 8c6-7 16-7 22 0" opacity=".45"/><path d="M4 11c5-5 11-5 16 0M8 14.500c3-3 6-3 8 0"/><circle cx="12" cy="17" r="1.300" fill="#fff"/></svg>
  <svg width="24" height="20" viewBox="0 0 24 20" fill="none" stroke="#fff" stroke-width="1.700"><path d="M1 7h4l5-5v16l-5-5H1zM13 6c2 2 2 6 0 8"/><path d="M16 4c3 3 3 9 0 12M19 2c5 5 5 11 0 16" opacity=".45"/></svg>
  <svg width="25" height="16" viewBox="0 0 25 16"><rect x="1" y="1" width="19" height="14" rx="3" fill="none" stroke="#fff" stroke-width="1.800"/><rect x="4" y="4" width="11" height="8" fill="#fff"/><path d="M22.500 5v6" stroke="#fff" stroke-width="2.500"/></svg>
  <div class="clock"><span data-w="44">09:49</span><br><span data-w="93">22-04-2024</span></div>
  <svg width="20" height="23" viewBox="0 0 20 23" fill="#5ef0fa"><path d="M10 0c-5 0-7 4-7 8v5l-3 5h20l-3-5V8c0-4-2-8-7-8zM6.500 20h7c-1 4-6 4-7 0z"/></svg>
  <svg width="36" height="35" viewBox="0 0 36 35"><path d="M23 8h5c6 0 7 4 5 9l-3 10H16l4-15c1-3 1-4 3-4z" fill="url(#g6)"/><path d="M10 0h10c4 0 4 3 5 7h-4c-2 0-3 1-4 4l-4 12c-1 3-3 4-6 4-6 0-8-4-6-9L5 5c1-3 2-5 5-5z" fill="url(#g5)"/><rect x="8" y="23" width="27" height="12" rx="2" fill="#ffc91d"/><text x="21.500" y="33" font-size="11.500" font-weight="700" text-anchor="middle" fill="#222">PRE</text></svg>
</div>

<script>
// Rows of the comparison picture: [left lines, right lines]
const rows = [
 [["Horizontal Axis","Wind Turbine"],["Vertical Axis","Wind Turbine"]],
 [["The rotating axis of the","blades is parallel to the","direction of the wind."],["The rotating axis of the","blades is perpendicular to","the direction of the wind."]],
 [["The main rotor shaft runs","horizontally in HAWTs."],["The main rotor shaft runs","vertically in VAWTs."]],
 [["HAWTs are generally used","under streamline wind","conditions where a constant","stream and direction of wind","is available."],["VAWTs are mainly beneficial","in areas with turbulent wind","flow such as rooftops,","coastlines, cityscapes, etc."]],
 [["The rotor faces the wind","stream to capture maximum","wind energy."],["The rotor can accept wind","stream from any direction."]],
 [["Inspection and maintenance","is difficult in HAWT."],["Inspection and maintenance","is easy."]],
 [["HAWTs extract more power","from wind."],["VAWTs extract less power","from wind."]],
 [["They are more efficient than","VAWTs."],["They are less efficient than","HAWTs."]],
 [["They operate fine in","moderate wind speeds."],["They can operate even in low","wind speeds."]]
];
const logo = '<svg class="dblogo" width="182" height="34" viewBox="0 0 182 34" fill="#fff"><rect x="1" y="1" width="57" height="32" fill="none" stroke="#fff" stroke-width="2"/><g fill="none" stroke="#fff" stroke-width="3.5"><path d="M7 10h12c12 0 12 14 0 14H7V10M30 10h19c6 0 6 7 0 7H36M49 17c7 0 6 7 0 7H30"/></g><g font-family="Open Sans" font-weight="600"><text x="61" y="17.500" font-size="23" textLength="120" lengthAdjust="spacingAndGlyphs">Difference</text><text x="61" y="33" font-size="18" textLength="120" lengthAdjust="spacingAndGlyphs">Between.net</text></g></svg>';
const html = rows.map((r,i)=>r.map((c,k)=>`<div class="cell ${k?'':'h'} ${i?'':'cellhead'}"><div class="wide ${i?'':'widehead'} ${i==1||i==2?'short':''}">${c.map(l=>`<div>${l}</div>`).join('')}</div></div>`).join('')).join('')+logo;
document.querySelectorAll('.pic').forEach(p=>p.innerHTML=html);
// Track labels to their design widths
document.querySelectorAll('[data-w]').forEach(e=>{
  const n=e.textContent.length, w=e.getBoundingClientRect().width;
  e.style.letterSpacing=((+e.dataset.w-w)/n).toFixed(3)+'px';
});
</script>
</body>
</html>
